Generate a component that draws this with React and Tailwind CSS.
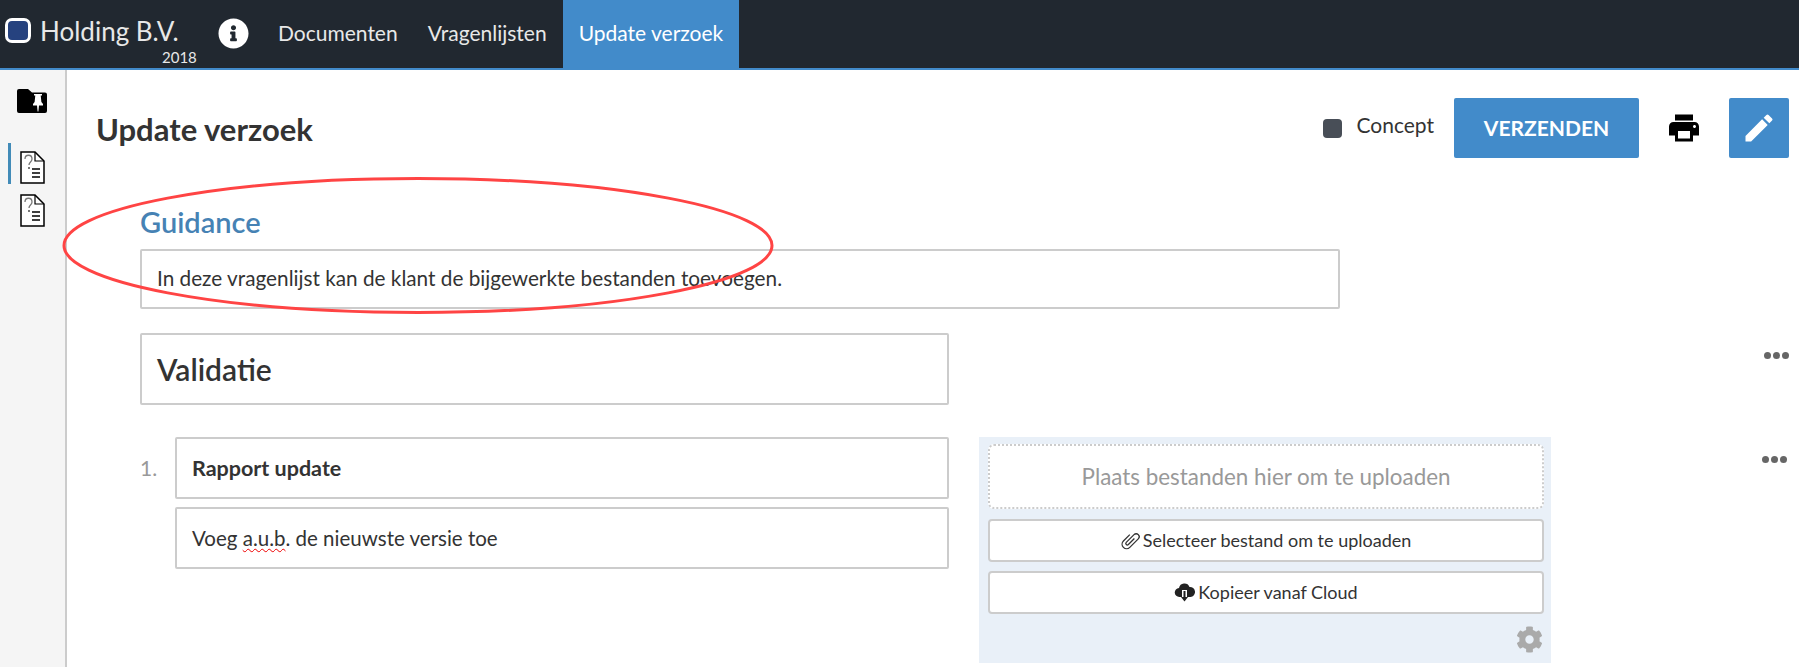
import React from 'react';
import { MdPrint, MdEdit } from 'react-icons/md';
import { FaCog, FaInfoCircle } from 'react-icons/fa';

const FONT = 'font-[Lato,"Open_Sans",sans-serif]';

const FolderPin = () => (
  <svg width="30" height="24" viewBox="0 0 30 24">
    <path d="M2 0h9l4 3.500h13a2 2 0 0 1 2 2V22a2 2 0 0 1-2 2H2a2 2 0 0 1-2-2V2a2 2 0 0 1 2-2z" fill="#000" />
    <path d="M17 5h8v1.500h-1.300l.7 6.500 1.600 2v1.500h-4l-.6 6h-.8l-.6-6h-4V15l1.600-2 .7-6.500H17z" fill="#fff" />
  </svg>
);

const QuestionDoc = () => (
  <svg width="25" height="33" viewBox="0 0 25 33">
    <path d="M1 1h14l9 9v22H1z" fill="#fff" stroke="#000" strokeWidth="1.500" />
    <path d="M15 1v9h9" fill="none" stroke="#000" strokeWidth="1.200" />
    <path d="M5 8c0-5 7-5 7 0 0 3-3 3-3 6" fill="none" stroke="#777" strokeWidth="1.300" />
    <rect x="8" y="16" width="2" height="2" fill="#777" />
    <path d="M12 18h8M12 22h8M12 26h8" stroke="#000" strokeWidth="1.500" />
  </svg>
);

const Clip = () => (
  <svg width="19" height="18" viewBox="0 0 18 18" fill="none" stroke="#333" strokeWidth="1.300" className="overflow-visible">
    <g transform="rotate(45 9 9)">
      <path d="M10 4.500V13a1.500 1.500 0 0 1-3 0V2a3 3 0 0 1 6 0v12a4.500 4.500 0 0 1-9 0V5" />
    </g>
  </svg>
);

const CloudDown = () => (
  <svg width="21" height="20" viewBox="0 0 20 20">
    <path d="M5 14a4.500 4.500 0 0 1-.5-9a5.500 5.500 0 0 1 10.500-1a4.500 4.500 0 0 1 1 10z" fill="#222" />
    <rect x="7.500" y="7" width="5" height="8" fill="#fff" />
    <rect x="9" y="8" width="2" height="7" fill="#222" />
    <path d="M6.500 14h7L10 18.500z" fill="#222" />
  </svg>
);

const Dots = () => (
  <div className="flex gap-[1px]">
    <span className="w-[7px] h-[7px] rounded-full bg-[#666]" />
    <span className="w-[7px] h-[7px] rounded-full bg-[#666] mx-[1px]" />
    <span className="w-[7px] h-[7px] rounded-full bg-[#666]" />
  </div>
);

export default function App() {
  return (
    <div className={`${FONT} relative h-[667px] w-full overflow-hidden bg-white text-[#333]`}>
      <header className="flex h-[70px] border-b-2 border-[#428bca] bg-[#212830] text-[#e8e8e8]">
        <div className="relative flex w-[205px] shrink-0 items-start pl-[5px] pt-[14px]">
          <span className="mt-[4px] h-[25px] w-[26px] rounded-[7px] border-[3px] border-white bg-[#26427f]" />
          <span className="ml-[9px] text-[26px] leading-[34px]">Holding B.V.</span>
          <span className="absolute left-[162px] top-[49px] text-[15px] leading-[17px]">2018</span>
        </div>
        <div className="flex w-[73px] shrink-0 items-center pl-[13px] pb-[2px]">
          <FaInfoCircle className="text-[31px] text-white" />
        </div>
        <nav className="flex text-[21px]">
          <a className="flex items-center pl-0 pr-[30px] pb-[2px]">Documenten</a>
          <a className="flex items-center pr-[16px] pb-[2px]">Vragenlijsten</a>
          <a className="flex items-center bg-[#428bca] px-[16px] pb-[2px] text-white">Update verzoek</a>
        </nav>
      </header>

      <div className="flex h-[597px]">
        <aside className="relative flex w-[67px] shrink-0 flex-col items-center border-r-2 border-[#ccc] bg-[#f5f5f5] pt-[19px] pl-[1px]">
          <div className="ml-[-3px]"><FolderPin /></div>
          <div className="mt-[30px] flex w-full items-end pl-[7px]">
            <span className="h-[41px] w-[3px] bg-[#428bb8]" />
            <span className="ml-[9px] flex"><QuestionDoc /></span>
          </div>
          <div className="mt-[10px] flex w-full pl-[19px]"><QuestionDoc /></div>
        </aside>

        <main className="flex-1 pl-[30px] pr-[10px]">
          <div className="flex items-start justify-between pt-[28px]">
            <h1 className="ml-[-1px] mt-[11px] text-[31px] leading-[40px] font-bold">Update verzoek</h1>
            <div className="flex items-center">
              <span className="h-[19px] w-[19px] rounded-[4px] bg-[#484e57]" />
              <span className="ml-[14px] mt-[-6px] text-[21px]">Concept</span>
              <button className="ml-[20px] h-[60px] w-[185px] rounded-[2px] bg-[#428bca] text-[21px] font-bold text-white">VERZENDEN</button>
              <MdPrint className="ml-[27px] text-[36px] text-black" />
              <button className="ml-[27px] flex h-[60px] w-[60px] items-center justify-center rounded-[2px] bg-[#428bca]">
                <MdEdit className="text-[36px] text-white" />
              </button>
            </div>
          </div>

          <div className="pl-[43px]">
            <h2 className="mt-[46px] text-[29px] leading-[36px] font-semibold text-[#4682b4]">Guidance</h2>
            <div className="mt-[9px] flex h-[60px] w-[1200px] items-center rounded-[2px] border-2 border-[#ccc] pl-[15px] text-[20.750px]">
              In deze vragenlijst kan de klant de bijgewerkte bestanden toevoegen.
            </div>

            <div className="relative mt-[24px] flex h-[72px] w-[809px] items-center rounded-[2px] border-2 border-[#ccc] pl-[15px] text-[30px] font-semibold">
              Validatie
              <div className="absolute left-[1622px] top-[17px]"><Dots /></div>
            </div>

            <div className="relative mt-[32px] flex items-start">
              <span className="w-[35px] pt-[18px] text-[21px] leading-[26px] text-[#999]">1.</span>
              <div className="w-[774px]">
                <div className="flex h-[62px] items-center rounded-[2px] border-2 border-[#ccc] pl-[15px] text-[21.500px] font-bold">Rapport update</div>
                <div className="mt-[8px] flex h-[62px] items-center rounded-[2px] border-2 border-[#ccc] pl-[15px] text-[20.500px]">
                  <span className="whitespace-pre">Voeg <span className="underline decoration-wavy decoration-[#e00] decoration-1 underline-offset-2">a.u.b</span>. de nieuwste versie toe</span>
                </div>
              </div>
              <div className="ml-[30px] h-[226px] w-[572px] bg-[#e9f0f8] pl-[9px] pr-[7px] pt-[7px]">
                <div className="flex h-[65px] items-center justify-center rounded-[6px] border-2 border-dotted border-[#ccc] bg-white text-[22.400px] text-[#999]">
                  Plaats bestanden hier om te uploaden
                </div>
                <button className="mt-[10px] flex h-[43px] w-full items-center justify-center gap-[3px] rounded-[4px] border-2 border-[#ccc] bg-white text-[18px]">
                  <Clip /> Selecteer bestand om te uploaden
                </button>
                <button className="mt-[9px] flex h-[43px] w-full items-center justify-center gap-[3px] rounded-[4px] border-2 border-[#ccc] bg-white text-[18px]">
                  <CloudDown /> Kopieer vanaf Cloud
                </button>
                <div className="mt-[12px] flex justify-end pr-[1px]">
                  <FaCog className="text-[27px] text-[#aaa]" />
                </div>
              </div>
              <div className="absolute left-[1622px] top-[19px]"><Dots /></div>
            </div>
          </div>
        </main>
      </div>

      {/* hand drawn annotation on top of the screenshot */}
      <svg className="pointer-events-none absolute left-0 top-0" width="1799" height="667">
        <ellipse cx="418" cy="245.500" rx="354" ry="67" fill="none" stroke="#f44" strokeWidth="3" />
      </svg>
    </div>
  );
}
